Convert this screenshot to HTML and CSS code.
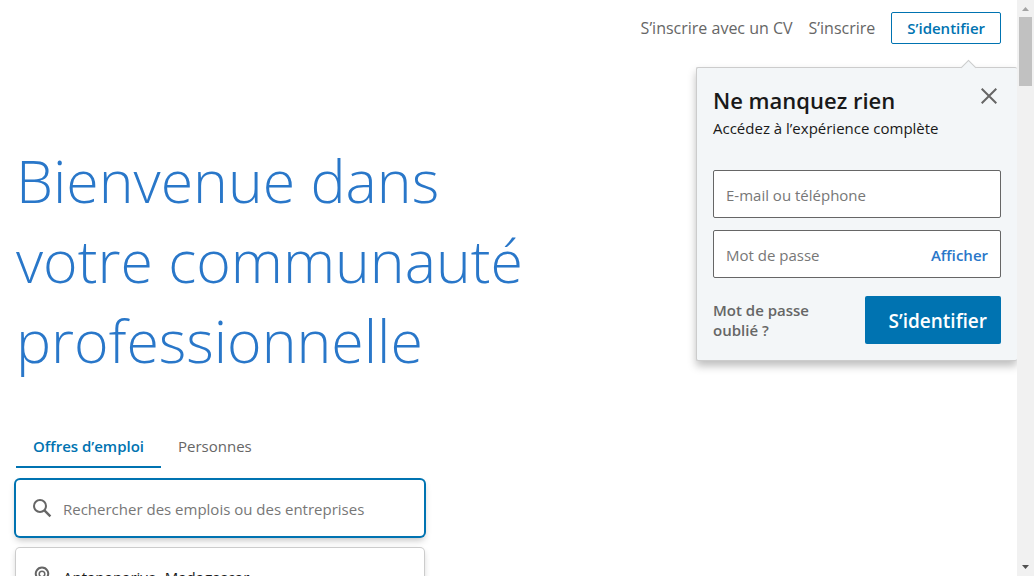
FILE: index.html
```html
<!DOCTYPE html>
<html lang="fr">
<head>
<meta charset="utf-8">
<meta name="viewport" content="width=device-width, initial-scale=1">
<title>Bienvenue</title>
<link rel="stylesheet" href="styles.css">
</head>
<body>
<div class="page">
  <header class="nav">
    <a class="nav-link" href="#cv">S’inscrire avec un CV</a>
    <a class="nav-link" href="#join">S’inscrire</a>
    <a class="nav-signin" href="#login">S’identifier</a>
    <section class="popover" aria-labelledby="popover-title">
      <div class="popover-arrow"></div>
      <button class="close" type="button" aria-label="Fermer">
        <svg width="16" height="16" viewBox="0 0 16 16" fill="none" stroke="#666" stroke-width="2"><path d="M.7.7l14.6 14.6M15.3.7L.7 15.3"/></svg>
      </button>
      <h2 class="popover-title" id="popover-title">Ne manquez rien</h2>
      <p class="popover-text">Accédez à l’expérience complète</p>
      <form class="login">
        <div class="field"><input class="field-input" type="text" placeholder="E-mail ou téléphone" aria-label="E-mail ou téléphone"></div>
        <div class="field">
          <input class="field-input" type="password" placeholder="Mot de passe" aria-label="Mot de passe">
          <button class="show" type="button">Afficher</button>
        </div>
        <div class="login-actions">
          <a class="forgot" href="#forgot">Mot de passe oublié ?</a>
          <button class="submit" type="submit">S’identifier</button>
        </div>
      </form>
    </section>
  </header>
  <main class="hero">
    <h1 class="headline">Bienvenue dans votre communauté professionnelle</h1>
    <div class="search">
      <div class="tabs" role="tablist">
        <button class="tab tab-active" type="button" role="tab" aria-selected="true">Offres d’emploi</button>
        <button class="tab" type="button" role="tab" aria-selected="false">Personnes</button>
      </div>
      <div class="search-box search-box-focus">
        <svg class="search-icon" width="20" height="20" viewBox="0 0 20 20" fill="none" stroke="#666" stroke-width="2"><circle cx="8" cy="8" r="6"/><path d="M12.4 12.4l6 6" stroke-width="2.4"/></svg>
        <input class="search-input" type="text" placeholder="Rechercher des emplois ou des entreprises" aria-label="Rechercher des emplois ou des entreprises">
      </div>
      <div class="search-box">
        <svg class="search-icon" width="20" height="20" viewBox="0 0 20 20" fill="none" stroke="#666"><path d="M4.5 10.5a6.2 6.2 0 1 1 11 0L10 18.6z" stroke-width="2"/><circle cx="10" cy="8" r="2.8" stroke-width="1.5"/></svg>
        <input class="search-input" type="text" value="Antananarivo, Madagascar" aria-label="Lieu">
      </div>
    </div>
  </main>
</div>
<div class="scrollbar" aria-hidden="true">
  <svg width="17" height="17" viewBox="0 0 17 17"><path d="M5 11l3.5-4 3.5 4z" fill="#a3a3a3"/></svg>
  <div class="scroll-thumb"></div>
  <svg class="scroll-down" width="17" height="17" viewBox="0 0 17 17"><path d="M5 6l3.5 4L12 6z" fill="#505050"/></svg>
</div>
</body>
</html>
```
FILE: styles.css
```css
* {
  box-sizing: border-box;
}

body {
  margin: 0;
  display: flex;
  height: 100vh;
  overflow: hidden;
  background: #fff;
  font: 15px/20px "Open Sans", "Noto Sans", sans-serif;
  color: #191919;
}

button,
input {
  font: inherit;
  border: 0;
  background: none;
  padding: 0;
}

a {
  text-decoration: none;
}

.page {
  flex: 1;
  min-width: 0;
  overflow: hidden;
}

.nav {
  position: relative;
  display: flex;
  justify-content: flex-end;
  align-items: center;
  gap: 16px;
  height: 56px;
  padding: 0 16px;
}

.nav-link {
  color: #666;
  font-size: 16px;
}

.nav-signin {
  padding: 5px 15px;
  border: 1px solid #0073b1;
  border-radius: 2px;
  color: #0073b1;
  font-weight: 600;
}

.popover {
  position: absolute;
  top: 67px;
  right: 0;
  width: 321px;
  padding: 16px;
  border: 1px solid #ccc;
  border-right: 0;
  border-radius: 2px;
  background: #f3f6f8;
  box-shadow: 0 5px 9px rgba(0, 0, 0, 0.26);
}

.popover-arrow {
  position: absolute;
  top: -6px;
  right: 43px;
  width: 11px;
  height: 11px;
  border: 1px solid #ccc;
  border-width: 1px 0 0 1px;
  background: #f3f6f8;
  transform: rotate(45deg);
}

.close {
  position: absolute;
  top: 20px;
  right: 20px;
  width: 16px;
  height: 16px;
}

.close svg {
  display: block;
}

.popover-title {
  margin: 0;
  font-size: 22px;
  line-height: 32px;
  font-weight: 600;
}

.popover-text {
  margin: 2px 0 32px;
  line-height: 20px;
}

.login {
  display: grid;
  gap: 12px;
}

.field {
  display: flex;
  align-items: center;
  height: 48px;
  padding: 2px 12px 0;
  border: 1px solid #666;
  border-radius: 2px;
  background: #fff;
}

.field-input {
  flex: 1;
  min-width: 0;
  outline: none;
}

.field-input::placeholder,
.search-input::placeholder {
  color: #777;
  opacity: 1;
}

.show {
  color: #2977c9;
  font-weight: 600;
}

.login-actions {
  display: flex;
  justify-content: space-between;
  align-items: center;
  padding-top: 6px;
}

.forgot {
  width: 120px;
  color: #666;
  font-weight: 600;
}

.submit {
  height: 48px;
  padding: 2px 14px 0 24px;
  border-radius: 2px;
  background: #0073b1;
  color: #fff;
  font-size: 19px;
  font-weight: 600;
}

.hero {
  padding: 84px 16px 0;
}

.headline {
  max-width: 560px;
  margin: 0;
  color: #2977c9;
  font-size: 59px;
  line-height: 80px;
  font-weight: 300;
}

.search {
  max-width: 408px;
  margin-top: 48px;
}

.tabs {
  display: flex;
  height: 40px;
  margin-bottom: 12px;
}

.tab {
  padding: 0 17px 4px;
  color: #666;
}

.tab-active {
  padding-bottom: 2px;
  border-bottom: 2px solid #0073b1;
  color: #0073b1;
  font-weight: 600;
}

.search-box {
  display: flex;
  align-items: center;
  gap: 11px;
  height: 56px;
  margin-bottom: 12px;
  padding: 0 16px;
  border-radius: 4px;
  background: #fff;
  box-shadow: 0 0 0 1px #ccc, 0 3px 6px rgba(0, 0, 0, 0.2);
}

.search-box-focus {
  box-shadow: 0 0 0 2px #0073b1, 0 4px 7px rgba(0, 0, 0, 0.25);
}

.search-icon {
  flex: none;
}

.search-input {
  flex: 1;
  min-width: 0;
  padding-top: 2px;
  color: #191919;
  outline: none;
}

.scrollbar {
  display: flex;
  flex-direction: column;
  align-items: center;
  width: 17px;
  background: #f1f1f1;
}

.scroll-thumb {
  width: 13px;
  height: 69px;
  background: #c1c1c1;
}

.scroll-down {
  margin-top: auto;
}
```
